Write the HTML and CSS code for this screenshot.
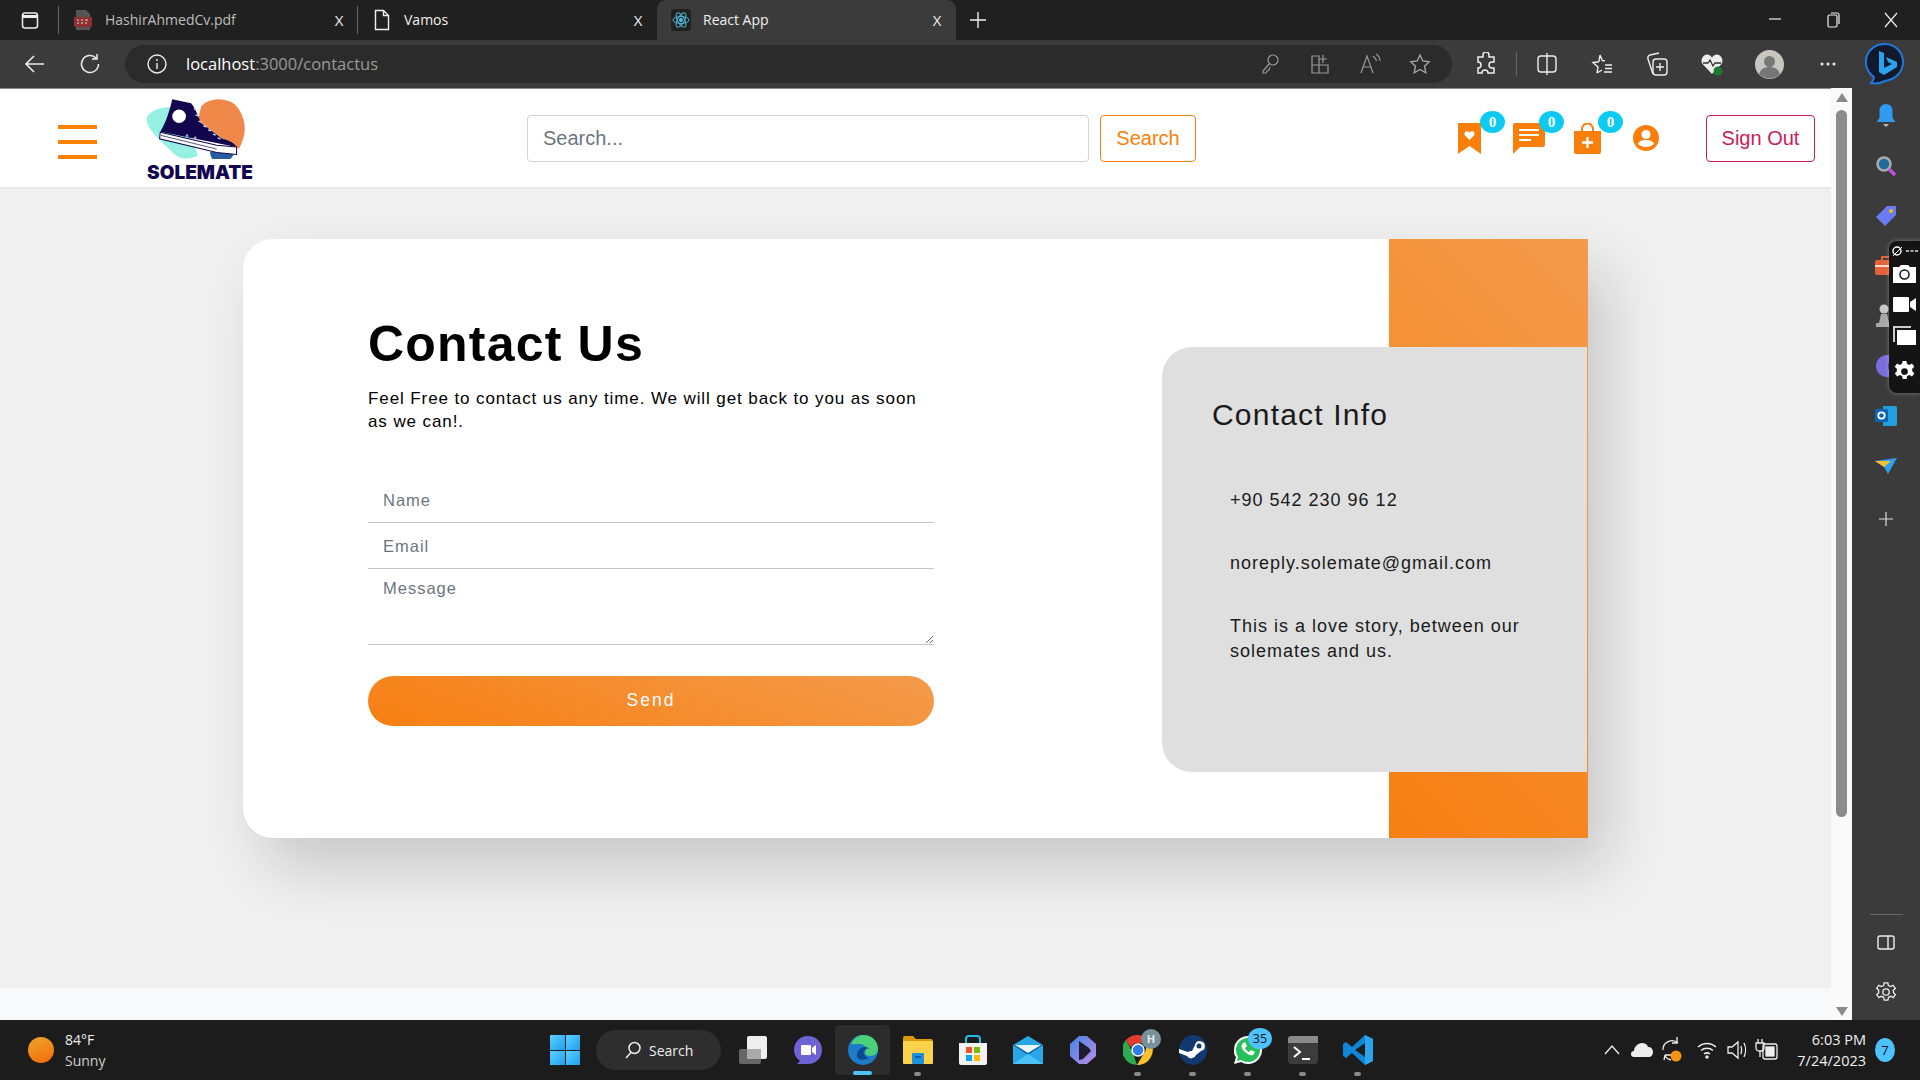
FILE: index.html
```html
<!DOCTYPE html>
<html lang="en">
<head>
  <meta charset="UTF-8">
  <title>React App</title>
  <link rel="stylesheet" href="styles.css">
</head>
<body>

  <!-- browser tabs -->
  <div class="tabbar">
    <span class="tab-actions">
      <svg width="20" height="20" viewBox="0 0 20 20" fill="none" stroke="#eee" stroke-width="1.5"><rect x="2.5" y="3" width="15" height="15" rx="2.5"/><path d="M2.5 6.5h15" stroke-width="3"/></svg>
    </span>
    <div class="tab">
      <svg class="tab-icon" width="20" height="22" viewBox="0 0 20 22"><path d="M3 1h10l4 4v16H3z" fill="#555"/><rect x="1" y="8" width="18" height="10" fill="#8f2f2f"/><path d="M4 11h2M8 11h2M12 11h3M4 14h2M8 14h2M12 14h2" stroke="#ddd"/></svg>
      <span class="tab-title muted">HashirAhmedCv.pdf</span>
      <span class="tab-x">X</span>
    </div>
    <div class="tab">
      <svg class="tab-icon" width="20" height="22" viewBox="0 0 20 22" fill="none" stroke="#eee" stroke-width="1.4"><path d="M3.5 1.5h8l5 5v14h-13zM11.5 1.5v5h5"/></svg>
      <span class="tab-title">Vamos</span>
      <span class="tab-x">X</span>
    </div>
    <div class="tab tab-active">
      <svg class="tab-icon" width="20" height="22" viewBox="0 0 20 22" fill="none" stroke="#4fb8d8" stroke-width="1"><rect width="20" height="22" rx="3" fill="#222" stroke="none"/><ellipse cx="10" cy="11" rx="8" ry="3.4"/><ellipse cx="10" cy="11" rx="8" ry="3.4" transform="rotate(60 10 11)"/><ellipse cx="10" cy="11" rx="8" ry="3.4" transform="rotate(120 10 11)"/><circle cx="10" cy="11" r="1.6" fill="#4fb8d8"/></svg>
      <span class="tab-title">React App</span>
      <span class="tab-x">X</span>
    </div>
    <span class="new-tab">
      <svg width="18" height="18" viewBox="0 0 18 18" stroke="#eee" stroke-width="1.4"><path d="M9 1v16M1 9h16"/></svg>
    </span>
    <div class="win-controls">
      <span><svg width="14" height="14" viewBox="0 0 14 14" stroke="#eee" stroke-width="1.2"><path d="M1 7h12"/></svg></span>
      <span><svg width="14" height="16" viewBox="0 0 14 16" fill="none" stroke="#eee" stroke-width="1.2"><rect x="2" y="3" width="9" height="12" rx="1.5"/><path d="M5 1h6a2 2 0 0 1 2 2v9"/></svg></span>
      <span><svg width="16" height="16" viewBox="0 0 16 16" stroke="#eee" stroke-width="1.2"><path d="M2 1l12 14M14 1L2 15"/></svg></span>
    </div>
  </div>

  <!-- address bar -->
  <div class="toolbar">
    <span class="tool">
      <svg width="22" height="22" viewBox="0 0 22 22" fill="none" stroke="#eee" stroke-width="1.6"><path d="M20 11H2M10 3l-8 8 8 8"/></svg>
    </span>
    <span class="tool">
      <svg width="22" height="22" viewBox="0 0 22 22" fill="none" stroke="#eee" stroke-width="1.5"><path d="M17 5a8.5 8.5 0 1 0 2.500 6M18 1v5h-5"/></svg>
    </span>
    <div class="address">
      <svg class="info-icon" width="22" height="22" viewBox="0 0 22 22" fill="none" stroke="#eee" stroke-width="1.4"><circle cx="11" cy="11" r="9"/><path d="M11 10v6M11 6v2"/></svg>
      <span class="url">localhost<span class="url-rest">:3000/contactus</span></span>
      <div class="address-tools">
        <span class="addr-tool"><svg width="20" height="22" viewBox="0 0 20 22" fill="none" stroke="#999" stroke-width="1.2"><circle cx="13" cy="7" r="5"/><path d="M9.500 10.500L3 18v2h3l1-2 2-1 1-3"/></svg></span>
        <span class="addr-tool"><svg width="20" height="22" viewBox="0 0 20 22" fill="none" stroke="#999" stroke-width="1.2"><path d="M2 3h7v17H2zM2 12h16v8H9M13 2v8M9 6h8"/></svg></span>
        <span class="addr-tool"><svg width="22" height="22" viewBox="0 0 22 22" fill="none" stroke="#999" stroke-width="1.2"><path d="M2 20L8 3l6 17M4.500 14h7M14 3c2 1.500 3 3 3.500 5M17 1c3 2 4 5 4 7"/></svg></span>
        <span class="addr-tool"><svg width="22" height="22" viewBox="0 0 22 22" fill="none" stroke="#aaa" stroke-width="1.3"><path d="M11 2l2.800 6 6.400.8-4.700 4.400 1.300 6.500L11 16.500l-5.800 3.200 1.300-6.500L1.800 8.800 8.200 8z"/></svg></span>
      </div>
    </div>
    <span class="tool">
      <svg width="22" height="24" viewBox="0 0 22 24" fill="none" stroke="#eee" stroke-width="1.5"><path d="M8 3a3 3 0 0 1 6 0v2h5v5h-2a3 3 0 0 0 0 6h2v5h-6a3 3 0 0 0-6 0H3v-5a3 3 0 0 0 0-6V5h5z"/></svg>
    </span>
    <span class="tool-sep"></span>
    <span class="tool">
      <svg width="22" height="24" viewBox="0 0 22 24" fill="none" stroke="#eee" stroke-width="1.4"><rect x="2" y="4" width="18" height="16" rx="3"/><path d="M11 1v22"/></svg>
    </span>
    <span class="tool">
      <svg width="24" height="24" viewBox="0 0 24 24" fill="none" stroke="#eee" stroke-width="1.4"><path d="M10 3l2.300 5.500 2.700.4M7 21l1-6-5-4.500 6-.7M7 21l5-3M15 13h7M15 16.500h7M14 20h8M10 3L8.800 9.800"/></svg>
    </span>
    <span class="tool">
      <svg width="24" height="26" viewBox="0 0 24 26" fill="none" stroke="#eee" stroke-width="1.4"><path d="M8 23L3 8a3 3 0 0 1 2-4l9-2"/><rect x="8" y="8" width="14" height="16" rx="3"/><path d="M15 12v8M11 16h8"/></svg>
    </span>
    <span class="tool">
      <svg width="24" height="24" viewBox="0 0 24 24"><path d="M12 22L2.500 12C0 8 3 2.500 7 2.500c2.500 0 4 1.500 5 3 1-1.500 2.500-3 5-3 4 0 7 5.500 4.500 9.500z" fill="#eee"/><path d="M3 11h5l2-3 3 6 2-3h6" fill="none" stroke="#333" stroke-width="1.3"/><circle cx="18" cy="19" r="4.500" fill="#1b7a2e"/></svg>
    </span>
    <span class="tool tool-shift">
      <svg width="29" height="29" viewBox="0 0 29 29"><circle cx="14.500" cy="14.500" r="14.500" fill="#c9c6c2"/><circle cx="14.500" cy="11.500" r="5.500" fill="#777"/><path d="M4 24c2-6 6-7 10.500-7S23 18 25 24a14.500 14.500 0 0 1-21 0z" fill="#777"/></svg>
    </span>
    <span class="tool tool-shift">
      <svg width="18" height="6" viewBox="0 0 18 6" fill="#eee"><circle cx="3" cy="3" r="1.500"/><circle cx="9" cy="3" r="1.500"/><circle cx="15" cy="3" r="1.500"/></svg>
    </span>
    <span class="bing">
      <svg width="40" height="44" viewBox="0 0 40 44"><path d="M20 2a18 18 0 0 1 18 18c0 10-7 17-18 19-4 2-9 3-14 2 2-2 3-4 3-6A18 18 0 0 1 20 2z" fill="#12192b" stroke="#1f78e0" stroke-width="2"/><path d="M14 9l5 2v15l8-4-4-2-2-5 11 5v5l-13 8-5-3z" fill="#2aa2f0"/></svg>
    </span>
  </div>

  <div class="middle">
    <div class="page">
      <header class="site-header">
        <button class="hamburger" type="button"><span></span><span></span><span></span></button>
        <div class="logo">
          <svg width="103" height="65" viewBox="310 15 300 190">
            <path d="M322 80C345 50 400 50 420 60L470 195C440 210 415 205 395 185C360 150 310 110 322 80Z" fill="#96f0e4"/>
            <path d="M480 50C510 20 570 25 590 60C615 100 610 140 590 175L540 145L470 90Z" fill="#f0884a"/>
            <path d="M505 185L580 175C570 228 510 230 505 185Z" fill="#265ea0"/>
            <path d="M395 30L450 42C465 60 470 80 480 100L540 145C555 150 575 155 583 170L360 125C378 95 388 60 395 30Z" fill="#12064f"/>
            <circle cx="415" cy="80" r="20" fill="#fff"/>
            <path d="M458 58l8 3M463 76l8 3M472 94l8 3M486 108l8 3M500 120l8 3M514 132l8 3M528 143l8 3" stroke="#dfe0ee" stroke-width="4"/>
            <circle cx="438" cy="137" r="4" fill="#aab"/><circle cx="462" cy="143" r="4" fill="#aab"/>
            <path d="M360 127L525 165L583 170V192L525 186L358 146Z" fill="#fff" stroke="#12064f" stroke-width="3"/>
            <path d="M362 136L525 176" stroke="#12064f" stroke-width="2"/>
          </svg>
          <span class="logo-name">SOLEMATE</span>
        </div>
        <form class="search-form">
          <input class="search-input" type="text" placeholder="Search...">
          <button class="search-btn" type="button">Search</button>
        </form>
        <div class="header-icons">
          <a class="icon-link">
            <svg width="23" height="31" viewBox="0 0 23 31"><path d="M0 1a1 1 0 0 1 1-1h21a1 1 0 0 1 1 1v30l-11.500-8L0 31z" fill="#f97f0a"/><path d="M11.500 17l-4.500-4.500c-2-3 2-6 4.500-3 2.500-3 6.500 0 4.500 3z" fill="#fff"/></svg>
            <span class="badge">0</span>
          </a>
          <a class="icon-link">
            <svg width="32" height="31" viewBox="0 0 32 31"><path d="M2 0h28a2 2 0 0 1 2 2v20a2 2 0 0 1-2 2H7l-7 7V2a2 2 0 0 1 2-2z" fill="#f97f0a"/><path d="M6 7h20M6 12h20M6 17h12" stroke="#fff" stroke-width="2"/></svg>
            <span class="badge">0</span>
          </a>
          <a class="icon-link">
            <svg width="27" height="31" viewBox="0 0 27 31"><path d="M8 9V6a5.500 5.500 0 0 1 11 0v3" fill="none" stroke="#f97f0a" stroke-width="2"/><path d="M0 8h27v21a2 2 0 0 1-2 2H2a2 2 0 0 1-2-2z" fill="#f97f0a"/><path d="M13.500 14v11M8 19.500h11" stroke="#fff" stroke-width="2.400"/></svg>
            <span class="badge">0</span>
          </a>
          <a class="icon-link icon-user">
            <svg width="26" height="26" viewBox="0 0 26 26"><circle cx="13" cy="13" r="13" fill="#f97f0a"/><circle cx="13" cy="9.500" r="4.500" fill="#fff"/><path d="M5 19c1-3 4-4 8-4s7 1 8 4c-2 2-5 3-8 3s-6-1-8-3z" fill="#fff"/></svg>
          </a>
        </div>
        <button class="signout-btn" type="button">Sign Out</button>
      </header>

      <main class="content">
        <section class="contact-card">
          <div class="form-side">
            <h1>Contact Us</h1>
            <p class="lead">Feel Free to contact us any time. We will get back to you as soon as we can!.</p>
            <form class="contact-form">
              <input class="field" type="text" placeholder="Name">
              <input class="field" type="email" placeholder="Email">
              <textarea class="field field-area" placeholder="Message"></textarea>
              <button class="send-btn" type="button">Send</button>
            </form>
          </div>
          <div class="accent"></div>
          <aside class="info-panel">
            <h2>Contact Info</h2>
            <p class="info-line">+90 542 230 96 12</p>
            <p class="info-line">noreply.solemate@gmail.com</p>
            <p class="info-line">This is a love story, between our solemates and us.</p>
          </aside>
        </section>
      </main>
      <footer class="site-footer"></footer>
    </div>

    <div class="scrollbar">
      <span class="arrow-up"></span>
      <span class="thumb"></span>
      <span class="arrow-down"></span>
    </div>

    <nav class="sidebar">
      <span class="side-item">
        <svg width="20" height="24" viewBox="0 0 20 24"><path d="M10 0c4 0 6.500 3 6.500 7v7l3 4H.5l3-4V7c0-4 2.500-7 6.500-7z" fill="#2f9bf0"/><path d="M7 20h6l-3 3z" fill="#bbb"/></svg>
      </span>
      <span class="side-item">
        <svg width="22" height="22" viewBox="0 0 22 22" fill="none"><circle cx="9" cy="9" r="6.500" fill="#1e6a9a" stroke="#aaa" stroke-width="2.500"/><path d="M14 14l6 6" stroke="#c34fe0" stroke-width="3.500"/></svg>
      </span>
      <span class="side-item">
        <svg width="22" height="22" viewBox="0 0 22 22"><path d="M12 1h9v9L10 21 1 12z" fill="#6a7cf5"/><circle cx="16" cy="6" r="2" fill="#f0c000"/></svg>
      </span>
      <span class="side-item">
        <svg width="22" height="20" viewBox="0 0 22 20"><rect y="4" width="22" height="15" rx="2" fill="#e2633a"/><path d="M7 4V1h8v3" fill="none" stroke="#e2633a" stroke-width="2"/><path d="M0 10h22" stroke="#fff" stroke-width="1.500"/></svg>
      </span>
      <span class="side-item">
        <svg width="22" height="24" viewBox="0 0 22 24"><circle cx="9" cy="5" r="4.500" fill="#c7c7c7"/><path d="M6 10h6l2 9h3v4H1v-4h3z" fill="#a8a8a8"/></svg>
      </span>
      <span class="side-item">
        <svg width="22" height="24" viewBox="0 0 22 24"><path d="M12 1a11 11 0 1 0 0 22c4 0 8-2 10-6-5 2-9 1-9-5s4-8 9-6c-2-3-6-5-10-5z" fill="#7a6de0"/></svg>
      </span>
      <span class="side-item">
        <svg width="22" height="20" viewBox="0 0 22 20"><path d="M8 0h12a2 2 0 0 1 2 2v16a2 2 0 0 1-2 2H8z" fill="#21a0e0"/><rect y="3" width="13" height="13" rx="1.500" fill="#0a64b8"/><circle cx="6.500" cy="9.500" r="3.200" fill="none" stroke="#fff" stroke-width="1.800"/></svg>
      </span>
      <span class="side-item">
        <svg width="22" height="16" viewBox="0 0 22 16"><path d="M0 3l22-3-9 16-4-7z" fill="#2fa0ee"/><path d="M0 3l16 0-7 6z" fill="#f6c02c"/></svg>
      </span>
      <span class="side-item side-add">
        <svg width="16" height="16" viewBox="0 0 16 16" stroke="#ddd" stroke-width="1.200"><path d="M8 1v14M1 8h14"/></svg>
      </span>
      <div class="side-bottom">
        <span class="side-sep"></span>
        <span class="side-small">
          <svg width="20" height="18" viewBox="0 0 20 18" fill="none" stroke="#eee" stroke-width="1.400"><rect x="2" y="3" width="16" height="13" rx="2"/><path d="M12 3v13"/></svg>
        </span>
        <span class="side-small">
          <svg width="22" height="22" viewBox="0 0 24 24" fill="none" stroke="#eee" stroke-width="1.400"><circle cx="12" cy="12" r="3.500"/><path d="M10 2h4l.6 3 2.500 1.100 2.700-1.500 2.400 3.400-2.200 2 .1 2.800 2.200 2-2.400 3.400-2.700-1.500-2.500 1.100-.6 3h-4l-.6-3-2.500-1.100-2.700 1.500-2.400-3.400 2.200-2-.1-2.800-2.200-2L4.200 4.600l2.700 1.500L9.400 5z"/></svg>
        </span>
      </div>
      <!-- capture tool floating over the sidebar -->
      <div class="capture-panel">
        <span class="capture-top">
          <svg width="26" height="12" viewBox="0 0 26 12"><circle cx="5" cy="6" r="4" fill="none" stroke="#fff" stroke-width="1.400"/><path d="M1 11L10 2" stroke="#fff"/><path d="M14 6h3M18.500 6h3M23 6h3" stroke="#ddd" stroke-width="1.600"/></svg>
        </span>
        <svg width="23" height="18" viewBox="0 0 23 18"><path d="M0 2h6l2-2h7l2 2h6v16H0z" fill="#fff"/><circle cx="11.500" cy="9.500" r="4.500" fill="none" stroke="#111" stroke-width="1.500"/></svg>
        <svg width="23" height="15" viewBox="0 0 23 15" fill="#fff"><rect width="16" height="15" rx="1"/><path d="M17 5l6-4v13l-6-4z"/></svg>
        <svg width="23" height="20" viewBox="0 0 23 20"><path d="M0 0h18v2H2v14H0z" fill="#ccc"/><rect x="4" y="4" width="19" height="15" fill="#fff"/></svg>
        <svg width="23" height="23" viewBox="0 0 24 24"><path d="M10 1h4l.6 3 2.500 1.100 2.700-1.500 2.400 3.400-2.200 2 .1 2.800 2.200 2-2.400 3.400-2.700-1.500-2.500 1.100-.6 3h-4l-.6-3-2.500-1.100-2.700 1.500-2.400-3.400 2.200-2-.1-2.800-2.200-2 2.400-3.400 2.700 1.500L9.400 4z" fill="#fff"/><circle cx="12" cy="12" r="3.500" fill="#111"/></svg>
      </div>
    </nav>
  </div>

  <!-- windows taskbar -->
  <div class="taskbar">
    <div class="weather">
      <span class="sun"></span>
      <div class="weather-text">
        <span>84°F</span>
        <span class="weather-sub">Sunny</span>
      </div>
    </div>
    <div class="task-center">
      <span class="win-logo"><i></i><i></i><i></i><i></i></span>
      <span class="task-search">
        <svg width="18" height="18" viewBox="0 0 18 18" fill="none" stroke="#eee" stroke-width="1.500"><circle cx="10.500" cy="7" r="5.500"/><path d="M7 11.500L2 17"/></svg>
        Search
      </span>
      <span class="task-app">
        <svg width="30" height="30" viewBox="0 0 30 30"><rect x="1" y="14" width="22" height="15" rx="2" fill="#666"/><rect x="9" y="1" width="20" height="23" rx="2" fill="#eee"/><rect x="9" y="14" width="14" height="10" fill="#aaa"/></svg>
      </span>
      <span class="task-app">
        <svg width="28" height="30" viewBox="0 0 28 30"><path d="M14 1c8 0 14 6 14 14s-6 14-14 14H3l3-3C2 23 0 19 0 15 0 7 6 1 14 1z" fill="#6e62d4"/><rect x="7" y="10" width="10" height="10" rx="1" fill="#fff"/><path d="M18 13l4-3v10l-4-3z" fill="#fff"/></svg>
      </span>
      <span class="task-app task-active">
        <svg width="30" height="30" viewBox="0 0 30 30"><circle cx="15" cy="15" r="15" fill="#1d7bc8"/><path d="M3 9C6 3 11 0 15 0c9 0 15 6 15 14 0 4-3 7-8 7-3 0-5-1-5-3 0-1 1-2 1-4 0-3-3-5-7-5-3 0-6 0-8 0z" fill="#4cd07a"/><path d="M9 21c0-5 3-9 8-9 3 0 5 2 5 2-3-1-5 0-6 2-1 3 1 6 5 7-5 3-12 2-12-2z" fill="#0b4a92"/></svg>
        <i class="app-bar"></i>
      </span>
      <span class="task-app">
        <svg width="30" height="28" viewBox="0 0 30 28"><path d="M0 2a2 2 0 0 1 2-2h8l3 3h15a2 2 0 0 1 2 2v3H0z" fill="#d99a0c"/><rect y="5" width="30" height="23" rx="1" fill="#fbd24a"/><rect x="9" y="17" width="12" height="11" rx="1" fill="#1d8fe0"/><path d="M12 21h6" stroke="#0b4a92" stroke-width="1.500"/></svg>
        <i class="app-dot"></i>
      </span>
      <span class="task-app">
        <svg width="28" height="30" viewBox="0 0 28 30"><path d="M0 8h28v20a2 2 0 0 1-2 2H2a2 2 0 0 1-2-2z" fill="#f2f2f2"/><path d="M7 8V4a3 3 0 0 1 3-3h8a3 3 0 0 1 3 3v4" fill="none" stroke="#27b8e8" stroke-width="2"/><rect x="7" y="12" width="6" height="6" fill="#f0502a"/><rect x="15" y="12" width="6" height="6" fill="#7fb800"/><rect x="7" y="20" width="6" height="6" fill="#0aa4ef"/><rect x="15" y="20" width="6" height="6" fill="#fbb800"/></svg>
      </span>
      <span class="task-app">
        <svg width="30" height="28" viewBox="0 0 30 28"><path d="M0 9L15 0l15 9v19H0z" fill="#27a7e8"/><path d="M0 9h30L15 19z" fill="#0b5fa8"/><path d="M2 9h26L15 17z" fill="#e9f6fd"/><path d="M0 28l15-10 15 10z" fill="#4cc2f4"/></svg>
      </span>
      <span class="task-app">
        <svg width="26" height="28" viewBox="0 0 26 28"><defs><linearGradient id="copilotFill" x1="0" y1="0" x2="1" y2="1"><stop offset="0" stop-color="#3f86e6"/><stop offset="1" stop-color="#c08ae8"/></linearGradient></defs><path d="M9 0h8l9 8v12l-9 8H9l-9-8V8z" fill="url(#copilotFill)"/><path d="M9 5l10 7 2 3-8 8-4 1z" fill="#1c1c2e"/></svg>
      </span>
      <span class="task-app">
        <svg width="30" height="30" viewBox="0 0 30 30"><path d="M15 0a15 15 0 0 1 13 8H15a7 7 0 0 0-7 5L3 5a15 15 0 0 1 12-5z" fill="#e33b2e"/><path d="M3 5l7 13 4 12A15 15 0 0 1 3 5z" fill="#2da94f"/><path d="M28 8a15 15 0 0 1-14 22l7-12a7 7 0 0 0 0-10z" fill="#fbc02d"/><circle cx="15" cy="15" r="6" fill="#2f7de8" stroke="#fff" stroke-width="1.500"/></svg>
        <b class="chrome-badge">H</b>
        <i class="app-dot"></i>
      </span>
      <span class="task-app">
        <svg width="28" height="30" viewBox="0 0 28 30"><ellipse cx="14" cy="15" rx="14" ry="15" fill="#103a6e"/><path d="M0 18l8 3a5 5 0 0 0 9-1l5-4a5 5 0 1 0-6-6l-3 6a5 5 0 0 0-4 1L0 14z" fill="#fff"/><circle cx="20" cy="11" r="2.500" fill="#103a6e"/></svg>
        <i class="app-dot"></i>
      </span>
      <span class="task-app">
        <svg width="30" height="30" viewBox="0 0 30 30"><path d="M15 1a14 14 0 0 1 0 28c-3 0-5-1-7-2l-7 2 2-7C1 20 1 18 1 15A14 14 0 0 1 15 1z" fill="#fff"/><path d="M15 3a12 12 0 0 1 0 24c-3 0-5-1-7-2l-4 1 1-4c-1-2-2-4-2-7A12 12 0 0 1 15 3z" fill="#25c05a"/><path d="M10 8c-2 2-2 5 1 8s6 5 9 4l2-3-4-2-2 2c-2-1-3-2-4-4l2-2-2-4z" fill="#fff"/></svg>
        <b class="wa-badge">35</b>
        <i class="app-dot"></i>
      </span>
      <span class="task-app">
        <svg width="30" height="28" viewBox="0 0 30 28"><rect width="30" height="28" rx="3" fill="#3c3c3c"/><path d="M0 3a3 3 0 0 1 3-3h27v7H0z" fill="#8a8a8a"/><path d="M6 11l6 5-6 5" fill="none" stroke="#fff" stroke-width="2"/><path d="M14 23h8" stroke="#fff" stroke-width="2"/></svg>
        <i class="app-dot"></i>
      </span>
      <span class="task-app">
        <svg width="30" height="30" viewBox="0 0 30 30"><path d="M22 0l8 4v22l-8 4-13-12-6 5-3-2v-12l3-2 6 5z" fill="#0f87d8"/><path d="M22 8L12 15l10 7z" fill="#1c1c1c"/><path d="M22 0l8 4v22l-8 4z" fill="#2aa4ef"/></svg>
        <i class="app-dot"></i>
      </span>
    </div>
    <div class="tray">
      <span class="tray-item"><svg width="16" height="10" viewBox="0 0 16 10" fill="none" stroke="#eee" stroke-width="1.300"><path d="M1 9l7-8 7 8"/></svg></span>
      <span class="tray-item"><svg width="22" height="16" viewBox="0 0 22 16" fill="#eee"><path d="M3 15a3 3 0 0 1 0-6c0-4 4-8 8-8 3 0 5 1 6 4 3 0 5 2 5 5s-2 5-4 5z"/></svg></span>
      <span class="tray-item"><svg width="22" height="28" viewBox="0 0 22 28" fill="none" stroke="#eee" stroke-width="1.300"><path d="M2 14a9 9 0 0 1 15-7M16 1v6h-5M4 19l-1 5M4 19h6M4 20a9 9 0 0 0 6 4"/><circle cx="15" cy="20" r="5.500" fill="#f5930f" stroke="none"/></svg></span>
      <span class="tray-item tray-wifi"><svg width="20" height="18" viewBox="0 0 20 18" fill="none" stroke="#eee" stroke-width="1.500"><path d="M1 6a13 13 0 0 1 18 0M4 9.500a9 9 0 0 1 12 0M7 13a5 5 0 0 1 6 0"/><circle cx="10" cy="16" r="1" fill="#eee"/></svg></span>
      <span class="tray-item"><svg width="20" height="22" viewBox="0 0 20 22" fill="none" stroke="#eee" stroke-width="1.300"><path d="M1 8v6h4l6 5V3L5 8zM14 7c1 3 1 5 0 8M17 4c2 4 2 10 0 14"/></svg></span>
      <span class="tray-item"><svg width="24" height="24" viewBox="0 0 24 24" fill="none" stroke="#eee" stroke-width="1.300"><rect x="8" y="6" width="14" height="15" rx="2"/><rect x="11" y="9" width="8" height="9" fill="#eee"/><path d="M3 1v4M7 1v4M1 5h8v5a3 3 0 0 1-3 3H4a3 3 0 0 1-3-3zM5 13v6"/></svg></span>
      <div class="clock">
        <span>6:03 PM</span>
        <span>7/24/2023</span>
      </div>
      <span class="notif">7</span>
    </div>
  </div>

</body>
</html>
```

FILE: styles.css
```css
* {
  box-sizing: border-box;
}

html,
body {
  margin: 0;
  padding: 0;
  width: 1920px;
  height: 1080px;
  overflow: hidden;
}

body {
  font-family: "Liberation Sans", Arial, sans-serif;
  background-color: #202020;
  color: #111;
}

svg {
  display: block;
  flex: none;
}

/* ---- browser tabs ---- */
.tabbar {
  height: 40px;
  background-color: #202020;
  display: flex;
  align-items: center;
  font-family: "Open Sans", sans-serif;
  font-size: 14px;
  color: #f0f0f0;
}

.tab-actions {
  width: 59px;
  padding-left: 20px;
  border-right: 1px solid #666;
  height: 28px;
  display: flex;
  align-items: center;
}

.tab {
  width: 299px;
  height: 40px;
  display: flex;
  align-items: center;
  padding: 0 12px 0 14px;
  position: relative;
}

.tab:nth-child(2)::after {
  content: "";
  position: absolute;
  right: 0;
  top: 6px;
  height: 28px;
  width: 1px;
  background: #666;
}

.tab-icon {
  margin-right: 12px;
}

.tab-title {
  flex: 1;
  padding-bottom: 2px;
}

.muted {
  color: #bdbdbd;
}

.tab-x {
  font-size: 15px;
  width: 14px;
  text-align: center;
}

.tab-active {
  background-color: #3b3b3b;
  border-radius: 9px 9px 0 0;
}

.new-tab {
  margin-left: 13px;
}

.win-controls {
  margin-left: auto;
  display: flex;
}

.win-controls span {
  width: 58px;
  display: flex;
  justify-content: center;
}

/* ---- address bar ---- */
.toolbar {
  height: 48px;
  background-color: #3b3b3b;
  display: flex;
  align-items: center;
  padding-left: 7px;
}

.tool {
  width: 55px;
  height: 40px;
  display: flex;
  align-items: center;
  justify-content: center;
}

.tool:nth-child(2) {
  margin-right: 8px;
}

.tool-shift {
  margin-left: 3px;
}

.address {
  width: 1327px;
  height: 38px;
  background-color: #2b2b2b;
  border-radius: 19px;
  display: flex;
  align-items: center;
  padding: 0 7px 0 21px;
  margin-right: 6px;
  font-family: "Open Sans", sans-serif;
  font-size: 16.500px;
  color: #fff;
}

.url {
  padding-bottom: 2px;
}

.info-icon {
  margin-right: 18px;
}

.url-rest {
  color: #9a9a9a;
}

.address-tools {
  margin-left: auto;
  display: flex;
}

.addr-tool {
  width: 50px;
  display: flex;
  justify-content: center;
}

.tool-sep {
  width: 1px;
  height: 24px;
  background: #666;
  margin: 0 2px 0 3px;
}

.bing {
  margin-left: 10px;
}

/* ---- middle ---- */
.middle {
  height: 932px;
  display: flex;
}

.page {
  width: 1831px;
  display: flex;
  flex-direction: column;
  background-color: #f0f0f0;
}

.site-header {
  height: 101px;
  background-color: #fff;
  border-bottom: 2px solid #e6e8ee;
  border-top: 1px solid #888;
  display: flex;
  align-items: center;
  padding: 0 16px 0 58px;
  flex: none;
}

.hamburger {
  width: 39px;
  height: 34px;
  margin: 8px 46px 0 0;
  padding: 0;
  border: none;
  background: none;
  display: flex;
  flex-direction: column;
  justify-content: space-between;
}

.hamburger span {
  display: block;
  height: 4px;
  background-color: #ff8205;
}

.logo {
  width: 112px;
  height: 86px;
  margin-right: 272px;
  margin-top: -2px;
  display: flex;
  flex-direction: column;
}

.logo-name {
  font-family: "Inter", sans-serif;
  font-weight: 900;
  font-size: 19px;
  line-height: 20px;
  color: #12064f;
  margin-left: 4px;
  margin-top: 4px;
}

.search-form {
  display: flex;
  gap: 11px;
}

.search-input {
  width: 562px;
  height: 47px;
  border: 1px solid #ced4da;
  border-radius: 4px;
  padding: 0 15px;
  font-family: "Liberation Sans", sans-serif;
  font-size: 20px;
  color: #333;
}

.search-input::placeholder {
  color: #6c757d;
}

.search-btn {
  width: 96px;
  height: 47px;
  border: 1px solid #f97f0a;
  border-radius: 4px;
  background: #fff;
  color: #f97f0a;
  font-family: "Liberation Sans", sans-serif;
  font-size: 20px;
  padding: 0;
}

.header-icons {
  margin-left: auto;
  display: flex;
  margin-right: 30px;
}

.icon-link {
  width: 59px;
  height: 46px;
  position: relative;
  display: flex;
  align-items: center;
  justify-content: center;
}

.icon-user {
  margin-left: -1px;
  margin-right: 1px;
}

.badge {
  position: absolute;
  top: -4px;
  left: 40px;
  width: 25px;
  height: 22px;
  border-radius: 50%;
  background-color: #0dcaf0;
  color: #fff;
  font-family: "Liberation Serif", serif;
  font-weight: 700;
  font-size: 15px;
  line-height: 22px;
  text-align: center;
}

.signout-btn {
  width: 109px;
  height: 47px;
  border: 1px solid #c81e55;
  border-radius: 4px;
  background: #fff;
  color: #c81e55;
  font-family: "Liberation Sans", sans-serif;
  font-size: 20px;
  padding: 0;
}

/* ---- contact card ---- */
.content {
  height: 799px;
  flex: none;
  padding: 50px 0 0 243px;
  overflow: hidden;
}

.contact-card {
  width: 1345px;
  height: 599px;
  background-color: #fff;
  border-radius: 30px 0 0 30px;
  box-shadow: 20px 30px 60px rgba(0, 0, 0, 0.17);
  display: flex;
  justify-content: space-between;
  position: relative;
}

.form-side {
  width: 691px;
  padding: 76px 0 0 125px;
}

h1 {
  margin: 0 0 14px;
  font-size: 50px;
  line-height: 58px;
  font-weight: 700;
  letter-spacing: 1.200px;
  color: #000;
}

.lead {
  margin: 0 0 44px;
  font-size: 17px;
  line-height: 23px;
  letter-spacing: 0.900px;
  color: #000;
}

.contact-form {
  display: flex;
  flex-direction: column;
}

.field {
  width: 566px;
  height: 46px;
  border: none;
  border-bottom: 1px solid #c4c4c4;
  padding: 2px 15px 0;
  font-family: "Liberation Sans", sans-serif;
  font-size: 16.500px;
  letter-spacing: 1px;
  outline: none;
  background: transparent;
}

.field::placeholder {
  color: #6c757d;
}

.field-area {
  height: 76px;
  padding-top: 10px;
  display: block;
  resize: both;
}

.send-btn {
  width: 566px;
  height: 50px;
  margin-top: 31px;
  padding-bottom: 3px;
  border: none;
  border-radius: 25px;
  background: linear-gradient(20deg, #f77f12, #f39b4c);
  color: #fff;
  font-family: "Liberation Sans", sans-serif;
  font-size: 17.500px;
  letter-spacing: 2px;
}

.accent {
  width: 199px;
  background: linear-gradient(45deg, #f77f12, #f39b4c);
}

.info-panel {
  position: absolute;
  left: 919px;
  top: 108px;
  width: 425px;
  height: 425px;
  background-color: #dfdfdf;
  border-radius: 30px 0 0 30px;
  padding: 51px 30px 0 50px;
  color: #1a1a1a;
}

h2 {
  margin: 0 0 56px;
  font-size: 30px;
  line-height: 34px;
  font-weight: 400;
  letter-spacing: 1.200px;
}

.info-line {
  margin: 0 0 38px 18px;
  font-size: 18px;
  line-height: 25px;
  letter-spacing: 1px;
}

.site-footer {
  height: 32px;
  flex: none;
  background-color: #f8f9fa;
}

/* ---- scrollbar ---- */
.scrollbar {
  width: 21px;
  background-color: #fafafa;
  display: flex;
  flex-direction: column;
  align-items: center;
  padding: 5px 0 4px;
}

.arrow-up {
  border: 6px solid transparent;
  border-top: none;
  border-bottom: 9px solid #8a8a8a;
  margin-bottom: 8px;
}

.thumb {
  width: 11px;
  height: 707px;
  background-color: #8c8c8c;
  border-radius: 6px;
}

.arrow-down {
  margin-top: auto;
  border: 6px solid transparent;
  border-bottom: none;
  border-top: 9px solid #8a8a8a;
}

/* ---- edge sidebar ---- */
.sidebar {
  flex: 1;
  background-color: #3b3b3b;
  display: flex;
  flex-direction: column;
  align-items: center;
  padding-top: 3px;
  position: relative;
}

.side-item {
  height: 50px;
  display: flex;
  align-items: center;
  justify-content: center;
}

.side-add {
  margin-top: 3px;
}

.side-bottom {
  margin-top: auto;
  display: flex;
  flex-direction: column;
  align-items: center;
  padding-bottom: 3px;
}

.side-sep {
  width: 33px;
  height: 1px;
  background: #666;
  margin-bottom: 2px;
}

.side-small {
  height: 50px;
  display: flex;
  align-items: center;
}

.capture-panel {
  position: absolute;
  top: 153px;
  right: 0;
  width: 31px;
  height: 152px;
  background-color: #141414;
  border-radius: 8px 0 0 8px;
  box-shadow: 0 0 4px rgba(255, 255, 255, 0.35);
  display: flex;
  flex-direction: column;
  align-items: center;
  gap: 14px;
  padding-top: 4px;
}

.capture-top {
  margin-bottom: -6px;
}

/* ---- taskbar ---- */
.taskbar {
  height: 60px;
  background-color: #1c1c1c;
  display: flex;
  align-items: center;
  font-family: "Open Sans", sans-serif;
  font-size: 14px;
  color: #f0f0f0;
}

.weather {
  width: 537px;
  padding-left: 28px;
  display: flex;
  align-items: center;
  gap: 11px;
}

.sun {
  width: 26px;
  height: 26px;
  border-radius: 50%;
  background: linear-gradient(160deg, #f0a62a, #f26a0c);
}

.weather-text {
  display: flex;
  flex-direction: column;
  line-height: 21px;
}

.weather-sub {
  color: #cfcfcf;
}

.task-center {
  display: flex;
  align-items: center;
  height: 60px;
}

.win-logo {
  width: 30px;
  height: 30px;
  margin-left: 13px;
  margin-right: 16px;
  display: grid;
  grid-template-columns: 1fr 1fr;
  gap: 1px;
}

.win-logo i {
  background: linear-gradient(135deg, #5fd0ff, #1aa0f0);
}

.task-search {
  width: 125px;
  height: 40px;
  border-radius: 20px;
  background-color: #2e2e2e;
  display: flex;
  align-items: center;
  padding-left: 28px;
  gap: 7px;
  font-size: 14px;
  margin-right: 4px;
}

.task-app {
  width: 55px;
  height: 50px;
  position: relative;
  display: flex;
  align-items: center;
  justify-content: center;
}

.task-active {
  background-color: #2b2b2b;
  border-radius: 4px;
}

.app-bar {
  position: absolute;
  bottom: 0;
  left: 18px;
  width: 19px;
  height: 4px;
  border-radius: 2px;
  background-color: #4cc2ff;
}

.app-dot {
  position: absolute;
  bottom: -1px;
  left: 24px;
  width: 7px;
  height: 4px;
  border-radius: 2px;
  background-color: #8a8a8a;
}

.chrome-badge {
  position: absolute;
  top: 4px;
  right: 4px;
  width: 20px;
  height: 20px;
  border-radius: 50%;
  background-color: #78909c;
  color: #e8e8e8;
  font-size: 11px;
  line-height: 20px;
  text-align: center;
}

.wa-badge {
  position: absolute;
  top: 3px;
  right: 3px;
  width: 24px;
  height: 21px;
  border-radius: 50%;
  background-color: #4cc2ff;
  color: #111;
  font-weight: 400;
  font-size: 12.500px;
  line-height: 21px;
  text-align: center;
}

.tray {
  margin-left: auto;
  display: flex;
  align-items: center;
  padding-right: 25px;
}

.tray-item {
  width: 30px;
  display: flex;
  justify-content: center;
}

.tray-wifi {
  margin-left: 5px;
}

.clock {
  margin-left: 15px;
  display: flex;
  flex-direction: column;
  align-items: flex-end;
  line-height: 21px;
  font-size: 14.500px;
}

.notif {
  width: 20px;
  height: 24px;
  margin-left: 9px;
  border-radius: 50%;
  background-color: #4cc2ff;
  color: #111;
  font-size: 13px;
  line-height: 24px;
  text-align: center;
}
```
